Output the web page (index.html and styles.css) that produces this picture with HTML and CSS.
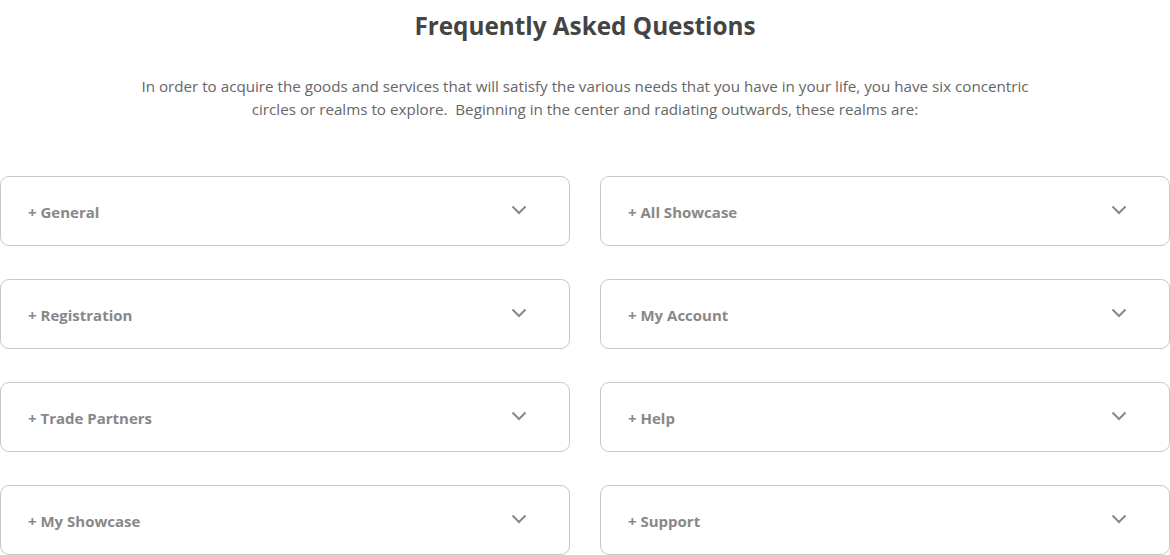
FILE: index.html
```html
<!DOCTYPE html>
<html lang="en">
<head>
    <meta charset="UTF-8">
    <meta name="viewport" content="width=device-width, initial-scale=1.0">
    <title>FAQ</title>
    <link rel="stylesheet" href="styles.css">
</head>
<body>
    <section class="faq">
        <h1>Frequently Asked Questions</h1>

        <p class="intro">
            In order to acquire the goods and services that will satisfy the various needs that you have in your life, you have six concentric
            circles or realms to explore.&nbsp; Beginning in the center and radiating outwards, these realms are:
        </p>

        <div class="faq-grid">
            <div class="faq-item"><span>+ General</span><svg class="chevron" viewBox="0 0 16 10"><path d="M1.5 1.5 L8 8 L14.5 1.5"/></svg></div>
            <div class="faq-item"><span>+ All Showcase</span><svg class="chevron" viewBox="0 0 16 10"><path d="M1.5 1.5 L8 8 L14.5 1.5"/></svg></div>
            <div class="faq-item"><span>+ Registration</span><svg class="chevron" viewBox="0 0 16 10"><path d="M1.5 1.5 L8 8 L14.5 1.5"/></svg></div>
            <div class="faq-item"><span>+ My Account</span><svg class="chevron" viewBox="0 0 16 10"><path d="M1.5 1.5 L8 8 L14.5 1.5"/></svg></div>
            <div class="faq-item"><span>+ Trade Partners</span><svg class="chevron" viewBox="0 0 16 10"><path d="M1.5 1.5 L8 8 L14.5 1.5"/></svg></div>
            <div class="faq-item"><span>+ Help</span><svg class="chevron" viewBox="0 0 16 10"><path d="M1.5 1.5 L8 8 L14.5 1.5"/></svg></div>
            <div class="faq-item"><span>+ My Showcase</span><svg class="chevron" viewBox="0 0 16 10"><path d="M1.5 1.5 L8 8 L14.5 1.5"/></svg></div>
            <div class="faq-item"><span>+ Support</span><svg class="chevron" viewBox="0 0 16 10"><path d="M1.5 1.5 L8 8 L14.5 1.5"/></svg></div>
        </div>
    </section>
</body>
</html>
```

FILE: styles.css
```css
* {
    margin: 0;
    padding: 0;
    box-sizing: border-box;
}

body {
    font-family: "Open Sans", "Noto Sans", sans-serif;
    background: #fff;
    color: #444;
}

.faq {
    width: 1170px;
    padding-top: 9px;
}

h1 {
    font-size: 24.3px;
    font-weight: 700;
    line-height: 34px;
    text-align: center;
    color: #444;
}

.intro {
    max-width: 900px;
    margin: 32px auto 0;
    font-size: 15.2px;
    line-height: 23px;
    text-align: center;
    color: #666;
}

.faq-grid {
    display: grid;
    grid-template-columns: 570px 570px;
    column-gap: 30px;
    row-gap: 33px;
    margin-top: 55px;
}

.faq-item {
    height: 70px;
    border: 1px solid #c8c8c8;
    border-radius: 9px;
    display: flex;
    align-items: center;
    justify-content: space-between;
    padding: 2px 42px 0 27px;
}

.faq-item span {
    font-size: 15px;
    font-weight: 700;
    color: #888;
}

.chevron {
    width: 16px;
    height: 10px;
    margin-top: -5px;
    fill: none;
    stroke: #888;
    stroke-width: 2;
}
```
